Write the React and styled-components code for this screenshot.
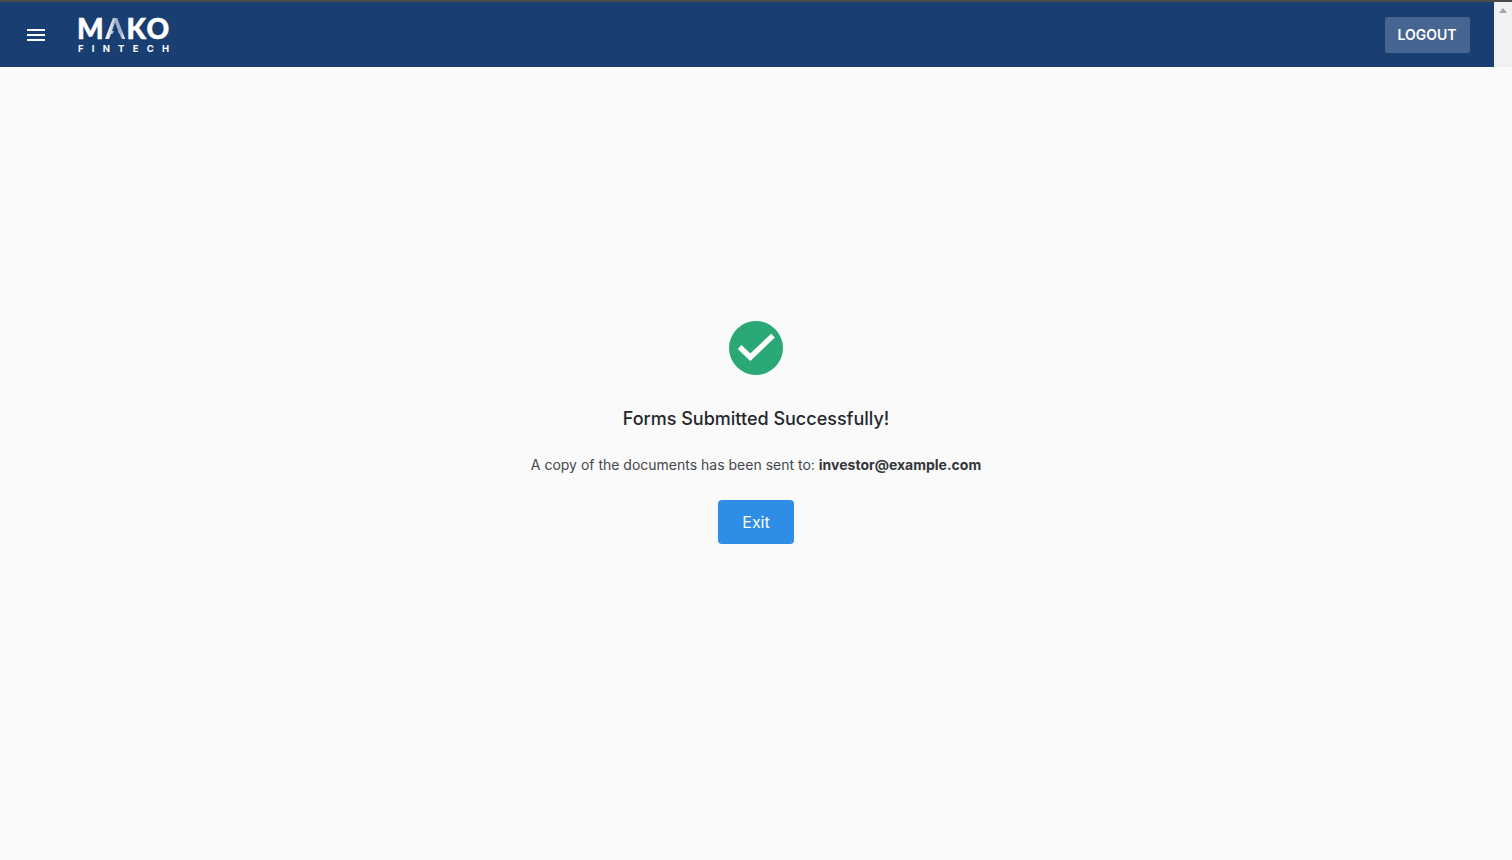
import styled, { createGlobalStyle } from "styled-components";

const GlobalStyle = createGlobalStyle`
  html, body {
    margin: 0;
    padding: 0;
    height: 100%;
    overflow: hidden;
    background: #fafafa;
    font-family: Inter, "Liberation Sans", sans-serif;
  }
  #root {
    height: 100%;
  }
`;

const Page = styled.div`
  display: flex;
  flex-direction: column;
  height: 100%;
`;

const WindowEdge = styled.div`
  height: 2px;
  background: #4a4a4a;
`;

const TopRow = styled.div`
  display: flex;
  height: 65px;
`;

const Header = styled.header`
  flex: 1;
  display: flex;
  align-items: center;
  justify-content: space-between;
  background: #193e72;
  padding: 0 24.5px 0 24px;
`;

const HeaderLeft = styled.div`
  display: flex;
  align-items: center;
  gap: 30px;
`;

const MenuButton = styled.button`
  display: flex;
  padding: 0;
  border: 0;
  background: none;
  color: #fff;
`;

const Logo = styled.div`
  display: flex;
  flex-direction: column;
  width: 91px;
  color: #fff;
`;

const LogoName = styled.div`
  margin-left: -1px;
  font-family: Lato, Inter, sans-serif;
  font-weight: 900;
  font-size: 28px;
  line-height: 24px;
  letter-spacing: 1.6px;
  white-space: nowrap;
  -webkit-text-stroke: 0.5px #fff;
`;

const LogoA = styled.span`
  position: relative;
  -webkit-text-stroke: 0;
  background: linear-gradient(100deg, #f2f5f9 0 25%, #9fb0c8 45% 70%, #e6ebf2 85%);
  -webkit-background-clip: text;
  background-clip: text;
  color: transparent;

  /* the logo's A has no crossbar */
  &::after {
    content: "";
    position: absolute;
    left: 50%;
    bottom: 4px;
    width: 14px;
    height: 13px;
    transform: translateX(-50%);
    background: #193e72;
    clip-path: polygon(50% 0, 100% 100%, 0 100%);
  }
`;

const LogoSub = styled.div`
  display: flex;
  justify-content: space-between;
  font-family: Inter, sans-serif;
  font-weight: 700;
  font-size: 9.5px;
  line-height: 11px;
  margin-top: 3px;
`;

const LogoutButton = styled.button`
  width: 85px;
  height: 36px;
  border: 0;
  border-radius: 2px;
  background: #466691;
  color: #fff;
  font-family: Inter, sans-serif;
  font-weight: 600;
  font-size: 14px;
`;

const ScrollTrack = styled.div`
  width: 18px;
  background: #f1f1f1;
  display: flex;
  justify-content: center;
  padding: 6px 1px 0 0;
  box-sizing: border-box;
`;

const ScrollArrow = styled.div`
  width: 0;
  height: 0;
  border-left: 4px solid transparent;
  border-right: 4px solid transparent;
  border-bottom: 5px solid #a3a3a3;
`;

const Content = styled.main`
  flex: 1;
  display: flex;
  flex-direction: column;
  align-items: center;
  padding-top: 254px;
`;

const SuccessBadge = styled.svg`
  display: block;
  width: 54px;
  height: 54px;
`;

const Title = styled.h1`
  margin: 32px 0 0;
  font-size: 18px;
  line-height: 24px;
  font-weight: 500;
  color: #24282d;
`;

const Note = styled.p`
  margin: 24px 0 0;
  font-size: 14px;
  line-height: 20px;
  color: #44484e;

  strong {
    font-weight: 700;
    color: #33363b;
  }
`;

const ExitButton = styled.button`
  margin-top: 25px;
  width: 76px;
  height: 44px;
  border: 0;
  border-radius: 4px;
  background: #2e8de4;
  color: #fff;
  font-family: Inter, sans-serif;
  font-size: 16px;
`;

export default function App() {
  return (
    <>
      <GlobalStyle />
      <Page>
        <WindowEdge />
        <TopRow>
          <Header>
            <HeaderLeft>
              <MenuButton aria-label='menu'>
                <svg width='24' height='24' viewBox='0 0 24 24' fill='currentColor'>
                  <path d='M3 18h18v-2H3v2zm0-5h18v-2H3v2zm0-7v2h18V6H3z' />
                </svg>
              </MenuButton>
              <Logo>
                <LogoName>
                  M<LogoA>A</LogoA>KO
                </LogoName>
                <LogoSub>
                  {"FINTECH".split("").map((letter, index) => (
                    <span key={`logo-letter-${index}`}>{letter}</span>
                  ))}
                </LogoSub>
              </Logo>
            </HeaderLeft>
            <LogoutButton>LOGOUT</LogoutButton>
          </Header>
          <ScrollTrack>
            <ScrollArrow />
          </ScrollTrack>
        </TopRow>
        <Content>
          <SuccessBadge viewBox='0 0 54 54'>
            <circle cx='27' cy='27' r='27' fill='#2aa876' />
            <path
              d='M10.6 26 21.3 36.2 44 14.6'
              fill='none'
              stroke='#fff'
              strokeWidth='5.4'
            />
          </SuccessBadge>
          <Title>Forms Submitted Successfully!</Title>
          <Note>
            A copy of the documents has been sent to:{" "}
            <strong>investor@example.com</strong>
          </Note>
          <ExitButton>Exit</ExitButton>
        </Content>
      </Page>
    </>
  );
}
